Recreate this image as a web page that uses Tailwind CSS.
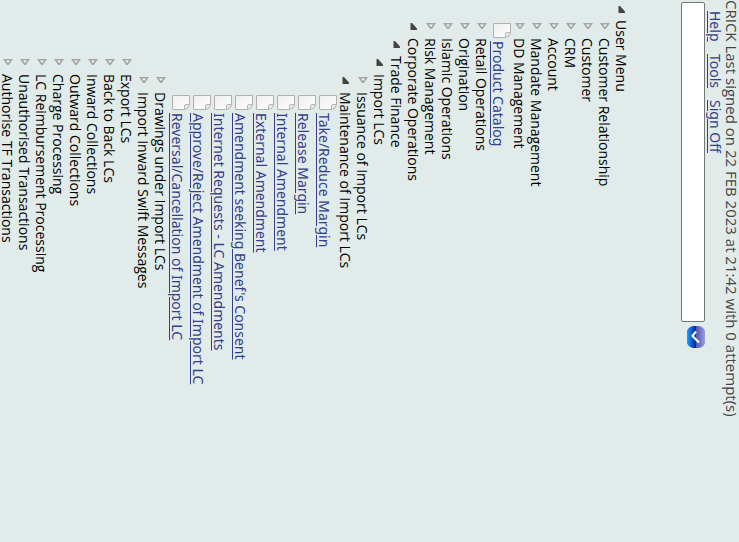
<!DOCTYPE html>
<html lang="en">
<head>
<meta charset="utf-8">
<title>User Menu</title>
<script src="https://cdn.jsdelivr.net/npm/@tailwindcss/browser@4"></script>
</head>
<body class="bg-[#e1ebe9]">
<svg class="absolute h-0 w-0" aria-hidden="true">
  <defs>
    <linearGradient id="paper" x1="0" y1="0" x2="1" y2="1"><stop offset="0" stop-color="#eeeeee"/><stop offset="1" stop-color="#ffffff"/></linearGradient>
    <linearGradient id="left" x1="0" y1="0" x2="1" y2="0"><stop offset="0" stop-color="#1aa0ff"/><stop offset="1" stop-color="#0a1fa0"/></linearGradient>
    <linearGradient id="right" x1="0" y1="0" x2="1" y2="0"><stop offset="0" stop-color="#5058b0"/><stop offset="1" stop-color="#9a9ee0"/></linearGradient>
    <symbol id="closed" viewBox="0 0 10 6"><path d="M0 0H10L5.8 6H4.200Z" fill="#a5a5a5"/><path d="M3 1.500H7L5 4Z" fill="#f4f6f6"/></symbol>
    <symbol id="open" viewBox="0 0 7 7"><path d="M0.500 0H2L7 5.500V7H0.500Z" fill="#444444"/></symbol>
    <symbol id="file" viewBox="0 0 18 15"><path d="M1 .500H17.500V10L13 14.500H1Q.500 14.500 .500 14V1Q.500 .500 1 .500Z" fill="url(#paper)" stroke="#b0b0b0"/><path d="M17.500 9.500H14Q12.500 9.500 12.500 11V14.500Q17 14 17.500 9.500Z" fill="#e8e8e8" stroke="#b8b8b8"/></symbol>
  </defs>
</svg>
<div class="h-screen w-full overflow-hidden bg-[#e1ebe9] font-['Open_Sans','Noto_Sans',sans-serif] text-[14px] leading-[17px] whitespace-nowrap text-black [writing-mode:vertical-rl]">
  <header>
    <p class="text-[15px] leading-[14px] text-[#444444]">CRICK Last signed on 22 FEB 2023 at 21:42 with 0 attempt(s)</p>
    <nav class="flex gap-3 ps-[11px] font-['Noto_Sans',sans-serif] leading-[20px] text-[#34408c] underline">
      <a href="#">Help</a>
      <a href="#">Tools</a>
      <a href="#">Sign Off</a>
    </nav>
    <form class="flex items-start gap-1 ps-[2px]">
      <input type="text" aria-label="Command" class="h-80 w-6 rounded-[2px] border border-[#767676] bg-white">
      <button type="button" aria-label="Run command">
        <svg class="h-[22px] w-[18px]" viewBox="0 0 18 22">
          <path d="M9 0H6Q1 1 0 5V17Q1 21 6 22H9Z" fill="url(#left)"/>
          <path d="M9 0H12Q17 1 18 5V17Q17 21 12 22H9Z" fill="url(#right)"/>
          <path d="M9 5.500L5.500 10L12 16.500" fill="none" stroke="#ffffff" stroke-width="2.200"/>
        </svg>
      </button>
    </form>
  </header>
  <main class="mr-[51px] pt-[6px]">
    <ul>
      <li>
        <div class="flex items-center"><svg class="h-[14px] w-[10px]"><use href="#open" x="1" width="7" height="7"/></svg>User Menu</div>
        <ul id="tree" class="ps-[17px]"></ul>
      </li>
    </ul>
  </main>
</div>
<script>
const tree = [
  ["Customer Relationship"], ["Customer"], ["CRM"], ["Account"], ["Mandate Management"], ["DD Management"],
  ["Product Catalog", "file"], ["Retail Operations"], ["Origination"], ["Islamic Operations"], ["Risk Management"],
  ["Corporate Operations", "open"],
  ["Trade Finance", "open", 1],
  ["Import LCs", "open", 2],
  ["Issuance of Import LCs", "closed", 3],
  ["Maintenance of Import LCs", "open", 3],
  ["Take/Reduce Margin", "file", 4], ["Release Margin", "file", 4], ["Internal Amendment", "file", 4],
  ["External Amendment", "file", 4], ["Amendment seeking Benef's Consent", "file", 4],
  ["Internet Requests - LC Amendments", "file", 4], ["Approve/Reject Amendment of Import LC", "file", 4],
  ["Reversal/Cancellation of Import LC", "file", 4],
  ["Drawings under Import LCs", "closed", 3], ["Import Inward Swift Messages", "closed", 3],
  ["Export LCs", "closed", 2], ["Back to Back LCs", "closed", 2], ["Inward Collections", "closed", 2],
  ["Outward Collections", "closed", 2], ["Charge Processing", "closed", 2], ["LC Reimbursement Processing", "closed", 2],
  ["Unauthorised Transactions", "closed", 2], ["Authorise TF Transactions", "closed", 2]
];
const lists = [document.getElementById("tree")];
for (const [label, kind = "closed", depth = 0] of tree) {
  if (!lists[depth]) {
    const sub = document.createElement("ul");
    sub.className = "ps-[18px]";
    lists[depth - 1].lastElementChild.append(sub);
    lists[depth] = sub;
  }
  lists.length = depth + 1;
  const li = document.createElement("li");
  li.innerHTML = kind === "file"
    ? `<div class="flex w-[21px] items-end gap-[3px]"><svg class="h-[15px] w-[18px] self-start"><use href="#file" width="18" height="15"/></svg><a href="#" class="font-['Noto_Sans',sans-serif] text-[#34408c] underline">${label}</a></div>`
    : kind === "open"
    ? `<div class="flex items-center"><svg class="h-[15px] w-[10px]"><use href="#open" x="1" width="7" height="7"/></svg>${label}</div>`
    : `<div class="flex items-center"><svg class="h-[15px] w-[10px]"><use href="#closed" width="10" height="6"/></svg>${label}</div>`;
  lists[depth].append(li);
}
</script>
</body>
</html>
